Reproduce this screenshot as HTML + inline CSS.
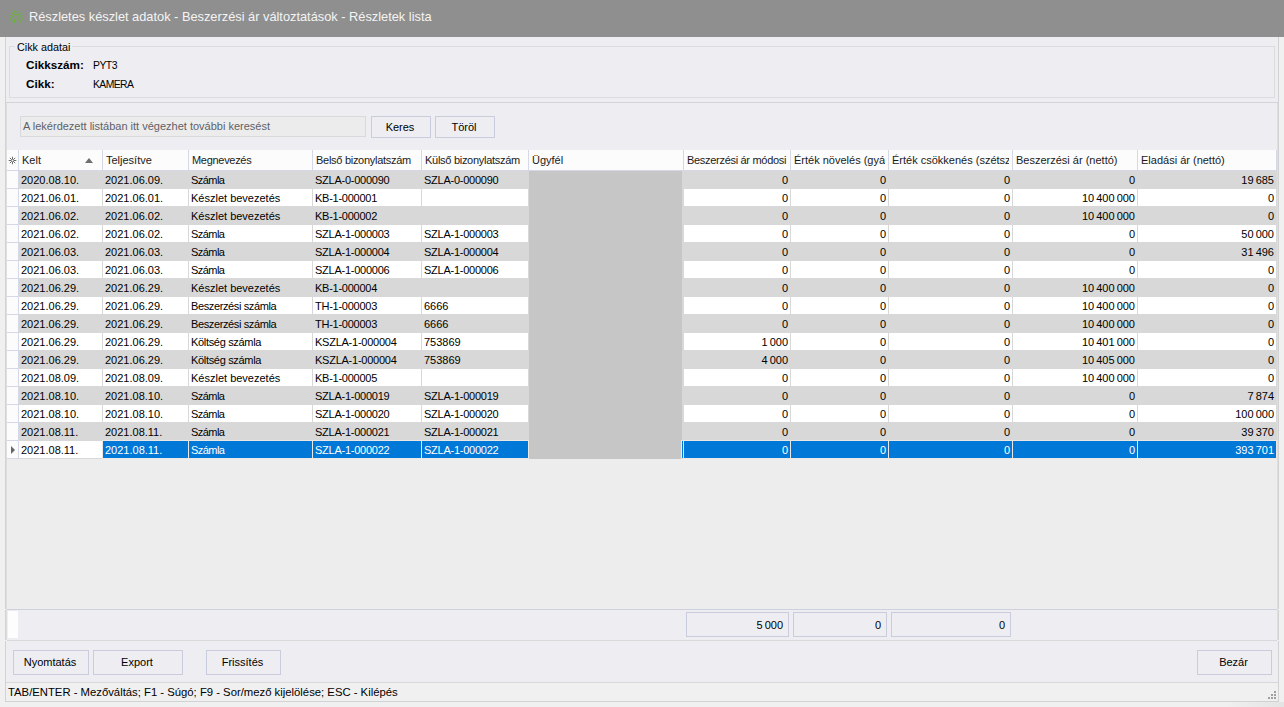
<!DOCTYPE html><html><head><meta charset="utf-8"><style>
*{margin:0;padding:0;box-sizing:border-box}
html,body{width:1284px;height:707px;overflow:hidden;background:#f0f0f0;font-family:"Liberation Sans",sans-serif;font-size:11px;color:#000}
.a{position:absolute}
.t{position:absolute;white-space:nowrap;line-height:13px}
.btn{position:absolute;border:1px solid #c9ccdc;background:#eeeef2;text-align:center;font-size:11px;line-height:22px;color:#000;padding-right:2px}
.hc{position:absolute;top:150px;height:20px;overflow:hidden;white-space:nowrap;line-height:20px;font-size:11px;color:#1a1a1a}
.c{position:absolute;height:17px;overflow:hidden;white-space:nowrap;line-height:19px;font-size:11px}
.r{text-align:right;word-spacing:-1px}
</style></head><body>

<div class="a" style="left:0;top:0;width:1284px;height:37px;background:#8f8f8f"></div>
<div class="t" style="left:29px;top:9px;font-size:12.8px;line-height:15px;color:#f4f4f4">Részletes készlet adatok - Beszerzési ár változtatások - Részletek lista</div>
<svg class="a" style="left:7px;top:8px" width="20" height="18" viewBox="0 0 20 18">
<g fill="none" stroke="#6cb23e" stroke-width="1.2" stroke-linecap="round">
<path d="M5.1 5.3 Q8.9 8.6 13.5 5.2"/><path d="M3.3 7.5 Q7.6 8.6 7.5 14.5"/><path d="M15 7.5 Q10.6 8.8 10.4 14.5"/>
</g><g fill="#6cb23e"><circle cx="7.6" cy="3.4" r="0.95"/><circle cx="10.6" cy="3.4" r="0.95"/><circle cx="3.05" cy="10.7" r="0.95"/><circle cx="4.6" cy="13.2" r="0.9"/><circle cx="15" cy="10.8" r="0.95"/><circle cx="13.5" cy="13.4" r="0.9"/></g></svg>
<div class="a" style="left:5px;top:37px;width:1274px;height:66px;background:#eeeef2;border-left:1px solid #d2d2d2;border-right:1px solid #d2d2d2"></div>
<div class="a" style="left:9px;top:46px;width:1266px;height:52px;border:1px solid #dcdcdf"></div>
<div class="t" style="left:15px;top:41px;padding:0 2px;background:#eeeef2;color:#000;font-size:10.8px">Cikk adatai</div>
<div class="t" style="left:26px;top:58px;font-weight:bold;font-size:11.7px">Cikkszám:</div>
<div class="t" style="left:93px;top:59px;font-size:10.4px;letter-spacing:-0.5px">PYT3</div>
<div class="t" style="left:26px;top:77px;font-weight:bold;font-size:11.7px">Cikk:</div>
<div class="t" style="left:93px;top:78px;font-size:10.4px;letter-spacing:-0.6px">KAMERA</div>
<div class="a" style="left:6px;top:102px;width:1272px;height:1px;background:#d4d4d4"></div>
<div class="a" style="left:5px;top:103px;width:1274px;height:47px;background:#eeeef2;border-left:1px solid #d2d2d2;border-right:1px solid #d2d2d2"></div>
<div class="a" style="left:20px;top:116px;width:346px;height:21px;border:1px solid #d9d9d9;background:#ececec"></div>
<div class="t" style="left:23px;top:120px;color:#5f5f68">A lekérdezett listában itt végezhet további keresést</div>
<div class="btn" style="left:371px;top:116px;width:60px;height:22px;line-height:20px">Keres</div>
<div class="btn" style="left:435px;top:116px;width:60px;height:22px;line-height:20px">Töröl</div>
<div class="a" style="left:5px;top:150px;width:1274px;height:459px;background:#ededed;border-left:1px solid #d2d2d2;border-right:1px solid #d2d2d2"></div>
<div class="a" style="left:7px;top:150px;width:1270px;height:20px;background:#fcfcfc"></div>
<div class="a" style="left:7px;top:170px;width:1270px;height:1px;background:#d5d8e6"></div>
<svg class="a" style="left:8px;top:156px" width="9" height="9" viewBox="0 0 9 9"><path d="M5.80 4.50L7.90 4.50 M5.42 5.42L6.90 6.90 M4.50 5.80L4.50 7.90 M3.58 5.42L2.10 6.90 M3.20 4.50L1.10 4.50 M3.58 3.58L2.10 2.10 M4.50 3.20L4.50 1.10 M5.42 3.58L6.90 2.10" stroke="#6a6a6a" stroke-width="1" stroke-linecap="round"/></svg>
<div class="hc" style="left:19px;width:80px;padding-left:3px">Kelt</div>
<div class="hc" style="left:103px;width:82px;padding-left:3px">Teljesítve</div>
<div class="hc" style="left:189px;width:120px;padding-left:3px;letter-spacing:-0.3px">Megnevezés</div>
<div class="hc" style="left:313px;width:105px;padding-left:3px;letter-spacing:-0.28px">Belső bizonylatszám</div>
<div class="hc" style="left:422px;width:103px;padding-left:3px;letter-spacing:-0.28px">Külső bizonylatszám</div>
<div class="hc" style="left:529px;width:151px;padding-left:3px">Ügyfél</div>
<div class="hc" style="left:684px;width:103px;padding-left:3px;letter-spacing:-0.3px">Beszerzési ár módosi</div>
<div class="hc" style="left:791px;width:94px;padding-left:3px">Érték növelés (gyá</div>
<div class="hc" style="left:889px;width:120px;padding-left:3px">Érték csökkenés (szétszo</div>
<div class="hc" style="left:1013px;width:121px;padding-left:3px">Beszerzési ár (nettó)</div>
<div class="hc" style="left:1138px;width:135px;padding-left:3px">Eladási ár (nettó)</div>
<div class="a" style="left:18px;top:150px;width:1px;height:20px;background:#d5d8e6"></div>
<div class="a" style="left:102px;top:150px;width:1px;height:20px;background:#d5d8e6"></div>
<div class="a" style="left:188px;top:150px;width:1px;height:20px;background:#d5d8e6"></div>
<div class="a" style="left:312px;top:150px;width:1px;height:20px;background:#d5d8e6"></div>
<div class="a" style="left:421px;top:150px;width:1px;height:20px;background:#d5d8e6"></div>
<div class="a" style="left:528px;top:150px;width:1px;height:20px;background:#d5d8e6"></div>
<div class="a" style="left:683px;top:150px;width:1px;height:20px;background:#d5d8e6"></div>
<div class="a" style="left:790px;top:150px;width:1px;height:20px;background:#d5d8e6"></div>
<div class="a" style="left:888px;top:150px;width:1px;height:20px;background:#d5d8e6"></div>
<div class="a" style="left:1012px;top:150px;width:1px;height:20px;background:#d5d8e6"></div>
<div class="a" style="left:1137px;top:150px;width:1px;height:20px;background:#d5d8e6"></div>
<div class="a" style="left:1276px;top:150px;width:1px;height:20px;background:#d5d8e6"></div>
<div class="a" style="left:85px;top:158px;width:0;height:0;border-left:4.5px solid transparent;border-right:4.5px solid transparent;border-bottom:5px solid #6e6e6e"></div>
<div class="a" style="left:7px;top:171px;width:12px;height:288px;background:#d5d8e6"></div>
<div class="a" style="left:19px;top:171px;width:1258px;height:288px;background:#d8d8d8"></div>
<div class="a" style="left:7px;top:171px;width:11px;height:17px;background:#fcfcfc"></div>
<div class="c" style="left:19px;top:171px;width:83px;background:#d8d8d8;color:#000;padding-left:2px">2020.08.10.</div>
<div class="c" style="left:103px;top:171px;width:85px;background:#d8d8d8;color:#000;padding-left:2px">2021.06.09.</div>
<div class="c" style="left:189px;top:171px;width:123px;background:#d8d8d8;color:#000;padding-left:2px;letter-spacing:-0.55px">Számla</div>
<div class="c" style="left:313px;top:171px;width:108px;background:#d8d8d8;color:#000;padding-left:2px;letter-spacing:-0.25px">SZLA-0-000090</div>
<div class="c" style="left:422px;top:171px;width:106px;background:#d8d8d8;color:#000;padding-left:2px;letter-spacing:-0.25px">SZLA-0-000090</div>
<div class="c r" style="left:684px;top:171px;width:106px;background:#d8d8d8;color:#000;padding-right:2px">0</div>
<div class="c r" style="left:791px;top:171px;width:97px;background:#d8d8d8;color:#000;padding-right:2px">0</div>
<div class="c r" style="left:889px;top:171px;width:123px;background:#d8d8d8;color:#000;padding-right:2px">0</div>
<div class="c r" style="left:1013px;top:171px;width:124px;background:#d8d8d8;color:#000;padding-right:2px">0</div>
<div class="c r" style="left:1138px;top:171px;width:138px;background:#d8d8d8;color:#000;padding-right:2px">19 685</div>
<div class="a" style="left:7px;top:189px;width:11px;height:17px;background:#fcfcfc"></div>
<div class="c" style="left:19px;top:189px;width:83px;background:#ffffff;color:#000;padding-left:2px">2021.06.01.</div>
<div class="c" style="left:103px;top:189px;width:85px;background:#ffffff;color:#000;padding-left:2px">2021.06.01.</div>
<div class="c" style="left:189px;top:189px;width:123px;background:#ffffff;color:#000;padding-left:2px">Készlet bevezetés</div>
<div class="c" style="left:313px;top:189px;width:108px;background:#ffffff;color:#000;padding-left:2px;letter-spacing:-0.25px">KB-1-000001</div>
<div class="c" style="left:422px;top:189px;width:106px;background:#ffffff;color:#000;padding-left:2px"></div>
<div class="c r" style="left:684px;top:189px;width:106px;background:#ffffff;color:#000;padding-right:2px">0</div>
<div class="c r" style="left:791px;top:189px;width:97px;background:#ffffff;color:#000;padding-right:2px">0</div>
<div class="c r" style="left:889px;top:189px;width:123px;background:#ffffff;color:#000;padding-right:2px">0</div>
<div class="c r" style="left:1013px;top:189px;width:124px;background:#ffffff;color:#000;padding-right:2px">10 400 000</div>
<div class="c r" style="left:1138px;top:189px;width:138px;background:#ffffff;color:#000;padding-right:2px">0</div>
<div class="a" style="left:7px;top:207px;width:11px;height:17px;background:#fcfcfc"></div>
<div class="c" style="left:19px;top:207px;width:83px;background:#d8d8d8;color:#000;padding-left:2px">2021.06.02.</div>
<div class="c" style="left:103px;top:207px;width:85px;background:#d8d8d8;color:#000;padding-left:2px">2021.06.02.</div>
<div class="c" style="left:189px;top:207px;width:123px;background:#d8d8d8;color:#000;padding-left:2px">Készlet bevezetés</div>
<div class="c" style="left:313px;top:207px;width:108px;background:#d8d8d8;color:#000;padding-left:2px;letter-spacing:-0.25px">KB-1-000002</div>
<div class="c" style="left:422px;top:207px;width:106px;background:#d8d8d8;color:#000;padding-left:2px"></div>
<div class="c r" style="left:684px;top:207px;width:106px;background:#d8d8d8;color:#000;padding-right:2px">0</div>
<div class="c r" style="left:791px;top:207px;width:97px;background:#d8d8d8;color:#000;padding-right:2px">0</div>
<div class="c r" style="left:889px;top:207px;width:123px;background:#d8d8d8;color:#000;padding-right:2px">0</div>
<div class="c r" style="left:1013px;top:207px;width:124px;background:#d8d8d8;color:#000;padding-right:2px">10 400 000</div>
<div class="c r" style="left:1138px;top:207px;width:138px;background:#d8d8d8;color:#000;padding-right:2px">0</div>
<div class="a" style="left:7px;top:225px;width:11px;height:17px;background:#fcfcfc"></div>
<div class="c" style="left:19px;top:225px;width:83px;background:#ffffff;color:#000;padding-left:2px">2021.06.02.</div>
<div class="c" style="left:103px;top:225px;width:85px;background:#ffffff;color:#000;padding-left:2px">2021.06.02.</div>
<div class="c" style="left:189px;top:225px;width:123px;background:#ffffff;color:#000;padding-left:2px;letter-spacing:-0.55px">Számla</div>
<div class="c" style="left:313px;top:225px;width:108px;background:#ffffff;color:#000;padding-left:2px;letter-spacing:-0.25px">SZLA-1-000003</div>
<div class="c" style="left:422px;top:225px;width:106px;background:#ffffff;color:#000;padding-left:2px;letter-spacing:-0.25px">SZLA-1-000003</div>
<div class="c r" style="left:684px;top:225px;width:106px;background:#ffffff;color:#000;padding-right:2px">0</div>
<div class="c r" style="left:791px;top:225px;width:97px;background:#ffffff;color:#000;padding-right:2px">0</div>
<div class="c r" style="left:889px;top:225px;width:123px;background:#ffffff;color:#000;padding-right:2px">0</div>
<div class="c r" style="left:1013px;top:225px;width:124px;background:#ffffff;color:#000;padding-right:2px">0</div>
<div class="c r" style="left:1138px;top:225px;width:138px;background:#ffffff;color:#000;padding-right:2px">50 000</div>
<div class="a" style="left:7px;top:243px;width:11px;height:17px;background:#fcfcfc"></div>
<div class="c" style="left:19px;top:243px;width:83px;background:#d8d8d8;color:#000;padding-left:2px">2021.06.03.</div>
<div class="c" style="left:103px;top:243px;width:85px;background:#d8d8d8;color:#000;padding-left:2px">2021.06.03.</div>
<div class="c" style="left:189px;top:243px;width:123px;background:#d8d8d8;color:#000;padding-left:2px;letter-spacing:-0.55px">Számla</div>
<div class="c" style="left:313px;top:243px;width:108px;background:#d8d8d8;color:#000;padding-left:2px;letter-spacing:-0.25px">SZLA-1-000004</div>
<div class="c" style="left:422px;top:243px;width:106px;background:#d8d8d8;color:#000;padding-left:2px;letter-spacing:-0.25px">SZLA-1-000004</div>
<div class="c r" style="left:684px;top:243px;width:106px;background:#d8d8d8;color:#000;padding-right:2px">0</div>
<div class="c r" style="left:791px;top:243px;width:97px;background:#d8d8d8;color:#000;padding-right:2px">0</div>
<div class="c r" style="left:889px;top:243px;width:123px;background:#d8d8d8;color:#000;padding-right:2px">0</div>
<div class="c r" style="left:1013px;top:243px;width:124px;background:#d8d8d8;color:#000;padding-right:2px">0</div>
<div class="c r" style="left:1138px;top:243px;width:138px;background:#d8d8d8;color:#000;padding-right:2px">31 496</div>
<div class="a" style="left:7px;top:261px;width:11px;height:17px;background:#fcfcfc"></div>
<div class="c" style="left:19px;top:261px;width:83px;background:#ffffff;color:#000;padding-left:2px">2021.06.03.</div>
<div class="c" style="left:103px;top:261px;width:85px;background:#ffffff;color:#000;padding-left:2px">2021.06.03.</div>
<div class="c" style="left:189px;top:261px;width:123px;background:#ffffff;color:#000;padding-left:2px;letter-spacing:-0.55px">Számla</div>
<div class="c" style="left:313px;top:261px;width:108px;background:#ffffff;color:#000;padding-left:2px;letter-spacing:-0.25px">SZLA-1-000006</div>
<div class="c" style="left:422px;top:261px;width:106px;background:#ffffff;color:#000;padding-left:2px;letter-spacing:-0.25px">SZLA-1-000006</div>
<div class="c r" style="left:684px;top:261px;width:106px;background:#ffffff;color:#000;padding-right:2px">0</div>
<div class="c r" style="left:791px;top:261px;width:97px;background:#ffffff;color:#000;padding-right:2px">0</div>
<div class="c r" style="left:889px;top:261px;width:123px;background:#ffffff;color:#000;padding-right:2px">0</div>
<div class="c r" style="left:1013px;top:261px;width:124px;background:#ffffff;color:#000;padding-right:2px">0</div>
<div class="c r" style="left:1138px;top:261px;width:138px;background:#ffffff;color:#000;padding-right:2px">0</div>
<div class="a" style="left:7px;top:279px;width:11px;height:17px;background:#fcfcfc"></div>
<div class="c" style="left:19px;top:279px;width:83px;background:#d8d8d8;color:#000;padding-left:2px">2021.06.29.</div>
<div class="c" style="left:103px;top:279px;width:85px;background:#d8d8d8;color:#000;padding-left:2px">2021.06.29.</div>
<div class="c" style="left:189px;top:279px;width:123px;background:#d8d8d8;color:#000;padding-left:2px">Készlet bevezetés</div>
<div class="c" style="left:313px;top:279px;width:108px;background:#d8d8d8;color:#000;padding-left:2px;letter-spacing:-0.25px">KB-1-000004</div>
<div class="c" style="left:422px;top:279px;width:106px;background:#d8d8d8;color:#000;padding-left:2px"></div>
<div class="c r" style="left:684px;top:279px;width:106px;background:#d8d8d8;color:#000;padding-right:2px">0</div>
<div class="c r" style="left:791px;top:279px;width:97px;background:#d8d8d8;color:#000;padding-right:2px">0</div>
<div class="c r" style="left:889px;top:279px;width:123px;background:#d8d8d8;color:#000;padding-right:2px">0</div>
<div class="c r" style="left:1013px;top:279px;width:124px;background:#d8d8d8;color:#000;padding-right:2px">10 400 000</div>
<div class="c r" style="left:1138px;top:279px;width:138px;background:#d8d8d8;color:#000;padding-right:2px">0</div>
<div class="a" style="left:7px;top:297px;width:11px;height:17px;background:#fcfcfc"></div>
<div class="c" style="left:19px;top:297px;width:83px;background:#ffffff;color:#000;padding-left:2px">2021.06.29.</div>
<div class="c" style="left:103px;top:297px;width:85px;background:#ffffff;color:#000;padding-left:2px">2021.06.29.</div>
<div class="c" style="left:189px;top:297px;width:123px;background:#ffffff;color:#000;padding-left:2px;letter-spacing:-0.38px">Beszerzési számla</div>
<div class="c" style="left:313px;top:297px;width:108px;background:#ffffff;color:#000;padding-left:2px;letter-spacing:-0.25px">TH-1-000003</div>
<div class="c" style="left:422px;top:297px;width:106px;background:#ffffff;color:#000;padding-left:2px">6666</div>
<div class="c r" style="left:684px;top:297px;width:106px;background:#ffffff;color:#000;padding-right:2px">0</div>
<div class="c r" style="left:791px;top:297px;width:97px;background:#ffffff;color:#000;padding-right:2px">0</div>
<div class="c r" style="left:889px;top:297px;width:123px;background:#ffffff;color:#000;padding-right:2px">0</div>
<div class="c r" style="left:1013px;top:297px;width:124px;background:#ffffff;color:#000;padding-right:2px">10 400 000</div>
<div class="c r" style="left:1138px;top:297px;width:138px;background:#ffffff;color:#000;padding-right:2px">0</div>
<div class="a" style="left:7px;top:315px;width:11px;height:17px;background:#fcfcfc"></div>
<div class="c" style="left:19px;top:315px;width:83px;background:#d8d8d8;color:#000;padding-left:2px">2021.06.29.</div>
<div class="c" style="left:103px;top:315px;width:85px;background:#d8d8d8;color:#000;padding-left:2px">2021.06.29.</div>
<div class="c" style="left:189px;top:315px;width:123px;background:#d8d8d8;color:#000;padding-left:2px;letter-spacing:-0.38px">Beszerzési számla</div>
<div class="c" style="left:313px;top:315px;width:108px;background:#d8d8d8;color:#000;padding-left:2px;letter-spacing:-0.25px">TH-1-000003</div>
<div class="c" style="left:422px;top:315px;width:106px;background:#d8d8d8;color:#000;padding-left:2px">6666</div>
<div class="c r" style="left:684px;top:315px;width:106px;background:#d8d8d8;color:#000;padding-right:2px">0</div>
<div class="c r" style="left:791px;top:315px;width:97px;background:#d8d8d8;color:#000;padding-right:2px">0</div>
<div class="c r" style="left:889px;top:315px;width:123px;background:#d8d8d8;color:#000;padding-right:2px">0</div>
<div class="c r" style="left:1013px;top:315px;width:124px;background:#d8d8d8;color:#000;padding-right:2px">10 400 000</div>
<div class="c r" style="left:1138px;top:315px;width:138px;background:#d8d8d8;color:#000;padding-right:2px">0</div>
<div class="a" style="left:7px;top:333px;width:11px;height:17px;background:#fcfcfc"></div>
<div class="c" style="left:19px;top:333px;width:83px;background:#ffffff;color:#000;padding-left:2px">2021.06.29.</div>
<div class="c" style="left:103px;top:333px;width:85px;background:#ffffff;color:#000;padding-left:2px">2021.06.29.</div>
<div class="c" style="left:189px;top:333px;width:123px;background:#ffffff;color:#000;padding-left:2px;letter-spacing:-0.32px">Költség számla</div>
<div class="c" style="left:313px;top:333px;width:108px;background:#ffffff;color:#000;padding-left:2px;letter-spacing:-0.25px">KSZLA-1-000004</div>
<div class="c" style="left:422px;top:333px;width:106px;background:#ffffff;color:#000;padding-left:2px">753869</div>
<div class="c r" style="left:684px;top:333px;width:106px;background:#ffffff;color:#000;padding-right:2px">1 000</div>
<div class="c r" style="left:791px;top:333px;width:97px;background:#ffffff;color:#000;padding-right:2px">0</div>
<div class="c r" style="left:889px;top:333px;width:123px;background:#ffffff;color:#000;padding-right:2px">0</div>
<div class="c r" style="left:1013px;top:333px;width:124px;background:#ffffff;color:#000;padding-right:2px">10 401 000</div>
<div class="c r" style="left:1138px;top:333px;width:138px;background:#ffffff;color:#000;padding-right:2px">0</div>
<div class="a" style="left:7px;top:351px;width:11px;height:17px;background:#fcfcfc"></div>
<div class="c" style="left:19px;top:351px;width:83px;background:#d8d8d8;color:#000;padding-left:2px">2021.06.29.</div>
<div class="c" style="left:103px;top:351px;width:85px;background:#d8d8d8;color:#000;padding-left:2px">2021.06.29.</div>
<div class="c" style="left:189px;top:351px;width:123px;background:#d8d8d8;color:#000;padding-left:2px;letter-spacing:-0.32px">Költség számla</div>
<div class="c" style="left:313px;top:351px;width:108px;background:#d8d8d8;color:#000;padding-left:2px;letter-spacing:-0.25px">KSZLA-1-000004</div>
<div class="c" style="left:422px;top:351px;width:106px;background:#d8d8d8;color:#000;padding-left:2px">753869</div>
<div class="c r" style="left:684px;top:351px;width:106px;background:#d8d8d8;color:#000;padding-right:2px">4 000</div>
<div class="c r" style="left:791px;top:351px;width:97px;background:#d8d8d8;color:#000;padding-right:2px">0</div>
<div class="c r" style="left:889px;top:351px;width:123px;background:#d8d8d8;color:#000;padding-right:2px">0</div>
<div class="c r" style="left:1013px;top:351px;width:124px;background:#d8d8d8;color:#000;padding-right:2px">10 405 000</div>
<div class="c r" style="left:1138px;top:351px;width:138px;background:#d8d8d8;color:#000;padding-right:2px">0</div>
<div class="a" style="left:7px;top:369px;width:11px;height:17px;background:#fcfcfc"></div>
<div class="c" style="left:19px;top:369px;width:83px;background:#ffffff;color:#000;padding-left:2px">2021.08.09.</div>
<div class="c" style="left:103px;top:369px;width:85px;background:#ffffff;color:#000;padding-left:2px">2021.08.09.</div>
<div class="c" style="left:189px;top:369px;width:123px;background:#ffffff;color:#000;padding-left:2px">Készlet bevezetés</div>
<div class="c" style="left:313px;top:369px;width:108px;background:#ffffff;color:#000;padding-left:2px;letter-spacing:-0.25px">KB-1-000005</div>
<div class="c" style="left:422px;top:369px;width:106px;background:#ffffff;color:#000;padding-left:2px"></div>
<div class="c r" style="left:684px;top:369px;width:106px;background:#ffffff;color:#000;padding-right:2px">0</div>
<div class="c r" style="left:791px;top:369px;width:97px;background:#ffffff;color:#000;padding-right:2px">0</div>
<div class="c r" style="left:889px;top:369px;width:123px;background:#ffffff;color:#000;padding-right:2px">0</div>
<div class="c r" style="left:1013px;top:369px;width:124px;background:#ffffff;color:#000;padding-right:2px">10 400 000</div>
<div class="c r" style="left:1138px;top:369px;width:138px;background:#ffffff;color:#000;padding-right:2px">0</div>
<div class="a" style="left:7px;top:387px;width:11px;height:17px;background:#fcfcfc"></div>
<div class="c" style="left:19px;top:387px;width:83px;background:#d8d8d8;color:#000;padding-left:2px">2021.08.10.</div>
<div class="c" style="left:103px;top:387px;width:85px;background:#d8d8d8;color:#000;padding-left:2px">2021.08.10.</div>
<div class="c" style="left:189px;top:387px;width:123px;background:#d8d8d8;color:#000;padding-left:2px;letter-spacing:-0.55px">Számla</div>
<div class="c" style="left:313px;top:387px;width:108px;background:#d8d8d8;color:#000;padding-left:2px;letter-spacing:-0.25px">SZLA-1-000019</div>
<div class="c" style="left:422px;top:387px;width:106px;background:#d8d8d8;color:#000;padding-left:2px;letter-spacing:-0.25px">SZLA-1-000019</div>
<div class="c r" style="left:684px;top:387px;width:106px;background:#d8d8d8;color:#000;padding-right:2px">0</div>
<div class="c r" style="left:791px;top:387px;width:97px;background:#d8d8d8;color:#000;padding-right:2px">0</div>
<div class="c r" style="left:889px;top:387px;width:123px;background:#d8d8d8;color:#000;padding-right:2px">0</div>
<div class="c r" style="left:1013px;top:387px;width:124px;background:#d8d8d8;color:#000;padding-right:2px">0</div>
<div class="c r" style="left:1138px;top:387px;width:138px;background:#d8d8d8;color:#000;padding-right:2px">7 874</div>
<div class="a" style="left:7px;top:405px;width:11px;height:17px;background:#fcfcfc"></div>
<div class="c" style="left:19px;top:405px;width:83px;background:#ffffff;color:#000;padding-left:2px">2021.08.10.</div>
<div class="c" style="left:103px;top:405px;width:85px;background:#ffffff;color:#000;padding-left:2px">2021.08.10.</div>
<div class="c" style="left:189px;top:405px;width:123px;background:#ffffff;color:#000;padding-left:2px;letter-spacing:-0.55px">Számla</div>
<div class="c" style="left:313px;top:405px;width:108px;background:#ffffff;color:#000;padding-left:2px;letter-spacing:-0.25px">SZLA-1-000020</div>
<div class="c" style="left:422px;top:405px;width:106px;background:#ffffff;color:#000;padding-left:2px;letter-spacing:-0.25px">SZLA-1-000020</div>
<div class="c r" style="left:684px;top:405px;width:106px;background:#ffffff;color:#000;padding-right:2px">0</div>
<div class="c r" style="left:791px;top:405px;width:97px;background:#ffffff;color:#000;padding-right:2px">0</div>
<div class="c r" style="left:889px;top:405px;width:123px;background:#ffffff;color:#000;padding-right:2px">0</div>
<div class="c r" style="left:1013px;top:405px;width:124px;background:#ffffff;color:#000;padding-right:2px">0</div>
<div class="c r" style="left:1138px;top:405px;width:138px;background:#ffffff;color:#000;padding-right:2px">100 000</div>
<div class="a" style="left:7px;top:423px;width:11px;height:17px;background:#fcfcfc"></div>
<div class="c" style="left:19px;top:423px;width:83px;background:#d8d8d8;color:#000;padding-left:2px">2021.08.11.</div>
<div class="c" style="left:103px;top:423px;width:85px;background:#d8d8d8;color:#000;padding-left:2px">2021.08.11.</div>
<div class="c" style="left:189px;top:423px;width:123px;background:#d8d8d8;color:#000;padding-left:2px;letter-spacing:-0.55px">Számla</div>
<div class="c" style="left:313px;top:423px;width:108px;background:#d8d8d8;color:#000;padding-left:2px;letter-spacing:-0.25px">SZLA-1-000021</div>
<div class="c" style="left:422px;top:423px;width:106px;background:#d8d8d8;color:#000;padding-left:2px;letter-spacing:-0.25px">SZLA-1-000021</div>
<div class="c r" style="left:684px;top:423px;width:106px;background:#d8d8d8;color:#000;padding-right:2px">0</div>
<div class="c r" style="left:791px;top:423px;width:97px;background:#d8d8d8;color:#000;padding-right:2px">0</div>
<div class="c r" style="left:889px;top:423px;width:123px;background:#d8d8d8;color:#000;padding-right:2px">0</div>
<div class="c r" style="left:1013px;top:423px;width:124px;background:#d8d8d8;color:#000;padding-right:2px">0</div>
<div class="c r" style="left:1138px;top:423px;width:138px;background:#d8d8d8;color:#000;padding-right:2px">39 370</div>
<div class="a" style="left:7px;top:441px;width:11px;height:17px;background:#fcfcfc"></div>
<div class="c" style="left:19px;top:441px;width:83px;background:#ffffff;color:#000;padding-left:2px">2021.08.11.</div>
<div class="a" style="left:102px;top:440px;width:87px;height:19px;background:#ebe7e4"></div>
<div class="c" style="left:103px;top:441px;width:85px;background:#0078d7;color:#fff;padding-left:2px">2021.08.11.</div>
<div class="a" style="left:188px;top:440px;width:125px;height:19px;background:#ebe7e4"></div>
<div class="c" style="left:189px;top:441px;width:123px;background:#0078d7;color:#fff;padding-left:2px;letter-spacing:-0.55px">Számla</div>
<div class="a" style="left:312px;top:440px;width:110px;height:19px;background:#ebe7e4"></div>
<div class="c" style="left:313px;top:441px;width:108px;background:#0078d7;color:#fff;padding-left:2px;letter-spacing:-0.25px">SZLA-1-000022</div>
<div class="a" style="left:421px;top:440px;width:108px;height:19px;background:#ebe7e4"></div>
<div class="c" style="left:422px;top:441px;width:106px;background:#0078d7;color:#fff;padding-left:2px;letter-spacing:-0.25px">SZLA-1-000022</div>
<div class="a" style="left:683px;top:440px;width:108px;height:19px;background:#ebe7e4"></div>
<div class="c r" style="left:684px;top:441px;width:106px;background:#0078d7;color:#fff;padding-right:2px">0</div>
<div class="a" style="left:790px;top:440px;width:99px;height:19px;background:#ebe7e4"></div>
<div class="c r" style="left:791px;top:441px;width:97px;background:#0078d7;color:#fff;padding-right:2px">0</div>
<div class="a" style="left:888px;top:440px;width:125px;height:19px;background:#ebe7e4"></div>
<div class="c r" style="left:889px;top:441px;width:123px;background:#0078d7;color:#fff;padding-right:2px">0</div>
<div class="a" style="left:1012px;top:440px;width:126px;height:19px;background:#ebe7e4"></div>
<div class="c r" style="left:1013px;top:441px;width:124px;background:#0078d7;color:#fff;padding-right:2px">0</div>
<div class="a" style="left:1137px;top:440px;width:140px;height:19px;background:#ebe7e4"></div>
<div class="c r" style="left:1138px;top:441px;width:138px;background:#0078d7;color:#fff;padding-right:2px">393 701</div>
<div class="a" style="left:529px;top:171px;width:153px;height:288px;background:#c6c6c6"></div>
<div class="a" style="left:681px;top:440px;width:1px;height:19px;background:#ebe7e4"></div>
<div class="a" style="left:682px;top:441px;width:1px;height:17px;background:#0078d7"></div>
<div class="a" style="left:11px;top:446px;width:0;height:0;border-top:4px solid transparent;border-bottom:4px solid transparent;border-left:4px solid #666"></div>
<div class="a" style="left:7px;top:609px;width:1270px;height:1px;background:#cdd0df"></div>
<div class="a" style="left:5px;top:610px;width:1274px;height:30px;background:#eeeef2;border-left:1px solid #d2d2d2;border-right:1px solid #d2d2d2"></div>
<div class="a" style="left:6px;top:103px;width:1px;height:537px;background:#dedede"></div>
<div class="a" style="left:1277px;top:103px;width:1px;height:537px;background:#dedede"></div>
<div class="a" style="left:8px;top:611px;width:10px;height:27px;background:#fdfdfd"></div>
<div class="a r" style="left:686px;top:612px;width:103px;height:25px;border:1px solid #c9ccdc;line-height:25px;padding-right:5px">5 000</div>
<div class="a r" style="left:793px;top:612px;width:94px;height:25px;border:1px solid #c9ccdc;line-height:25px;padding-right:5px">0</div>
<div class="a r" style="left:891px;top:612px;width:120px;height:25px;border:1px solid #c9ccdc;line-height:25px;padding-right:5px">0</div>
<div class="a" style="left:7px;top:640px;width:1270px;height:1px;background:#d8d8d8"></div>
<div class="a" style="left:5px;top:641px;width:1274px;height:42px;background:#eeeef2;border-left:1px solid #d2d2d2;border-right:1px solid #d2d2d2"></div>
<div class="btn" style="left:13px;top:650px;width:76px;height:25px;line-height:23px">Nyomtatás</div>
<div class="btn" style="left:93px;top:650px;width:90px;height:25px;line-height:23px">Export</div>
<div class="btn" style="left:206px;top:650px;width:75px;height:25px;line-height:23px">Frissítés</div>
<div class="btn" style="left:1197px;top:650px;width:75px;height:25px;line-height:23px">Bezár</div>
<div class="a" style="left:6px;top:682px;width:1272px;height:1px;background:#d8d8d8"></div>
<div class="a" style="left:5px;top:683px;width:1274px;height:19px;background:#f0f0f0;border-left:1px solid #d2d2d2;border-right:1px solid #d2d2d2;border-bottom:1px solid #d2d2d2"></div>
<div class="t" style="left:8px;top:686px;font-size:11.3px">TAB/ENTER - Mezőváltás; F1 - Súgó; F9 - Sor/mező kijelölése; ESC - Kilépés</div>
<div class="a" style="left:1274px;top:691px;width:2px;height:2px;background:#a0a0a0"></div>
<div class="a" style="left:1271px;top:694px;width:2px;height:2px;background:#a0a0a0"></div>
<div class="a" style="left:1274px;top:694px;width:2px;height:2px;background:#a0a0a0"></div>
<div class="a" style="left:1268px;top:697px;width:2px;height:2px;background:#a0a0a0"></div>
<div class="a" style="left:1271px;top:697px;width:2px;height:2px;background:#a0a0a0"></div>
<div class="a" style="left:1274px;top:697px;width:2px;height:2px;background:#a0a0a0"></div>
<div class="a" style="left:1150px;top:702px;width:134px;height:5px;background:linear-gradient(to right,rgba(0,0,0,0) 55%,rgba(0,0,0,0.05))"></div>
</body></html>
